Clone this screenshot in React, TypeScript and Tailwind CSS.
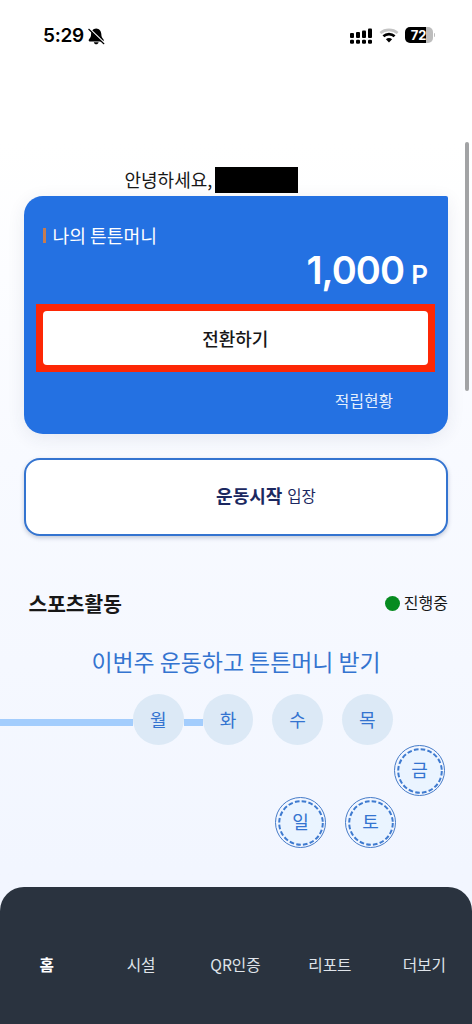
import clsx from "clsx";

const weekDays = ["월", "화", "수", "목"];

const menus = [
    { name: "홈", active: true },
    { name: "시설", active: false },
    { name: "QR인증", active: false },
    { name: "리포트", active: false },
    { name: "더보기", active: false },
];

function StatusBar() {
    return (
        <div className="flex h-[72px] items-start justify-between pl-[43px] pr-[37px] pt-[23px] text-black">
            <div className="flex items-center">
                <span className="font-['Inter'] text-[19px] font-semibold leading-[26px] tracking-[-0.3px]">5:29</span>
                <svg className="ml-[4px] h-[17px] w-[17px]" viewBox="0 0 17 17">
                    <path d="M8.2 0.4C5 0.6 3.2 3 3.1 6C3 9 2.2 9.9 1 11.3C0.4 12.2 0.7 13.4 1.8 13.4H14.8C15.8 13.4 16 12.2 15.4 11.3C14.2 9.9 13.4 9 13.3 6C13.2 3 11.3 0.6 8.2 0.4Z" fill="black" />
                    <path d="M5.8 14.2H10.6C10.2 15.7 9.3 16.3 8.2 16.3S6.2 15.7 5.8 14.2Z" fill="black" />
                    <path d="M1.6 0.8L16.4 15" stroke="white" strokeWidth="1.6" />
                    <path d="M0.8 1.3L15.8 15.7" stroke="black" strokeWidth="1.2" strokeLinecap="round" />
                </svg>
            </div>
            <div className="flex h-[26px] items-center">
                <svg className="mt-[-2px] h-[17px] w-[23px]" viewBox="0 0 23 17">
                    <rect x="0" y="6" width="4" height="5" rx="1" />
                    <rect x="6" y="5" width="4" height="6" rx="1" />
                    <rect x="12" y="3.5" width="4" height="7.5" rx="1" />
                    <rect x="18" y="1.5" width="4" height="9.5" rx="1" />
                    <rect x="0" y="12.7" width="4" height="4" rx="1.2" />
                    <rect x="6" y="12.7" width="4" height="4" rx="1.2" />
                    <rect x="12" y="12.7" width="4" height="4" rx="1.2" />
                    <rect x="18" y="12.7" width="4" height="4" rx="1.2" />
                </svg>
                <svg className="ml-[6px] mt-[-2px] h-[15px] w-[20px]" viewBox="0 0 20 15" fill="none">
                    <path d="M1.4 5C6.1 0.8 13.9 0.8 18.6 5" stroke="#c4c4c4" strokeWidth="2.6" />
                    <path d="M4.4 8.3C7.5 5.4 12.5 5.4 15.6 8.3" stroke="black" strokeWidth="2.6" />
                    <path d="M10 14.4L6.9 11.2C8.7 9.7 11.3 9.7 13.1 11.2Z" fill="black" />
                </svg>
                <div className="ml-[6px] mt-[-2px] flex h-[16px] w-[28px] items-center justify-center rounded-[5px] bg-linear-to-r from-black from-[74%] to-[#bdbdbd] to-[74%]">
                    <span className="font-['Inter'] text-[13px] font-bold leading-none text-white">72</span>
                </div>
                <div className="ml-[1px] mt-[-2px] h-[4px] w-[1.5px] rounded-r-full bg-[#bdbdbd]" />
            </div>
        </div>
    );
}

function MoneyCard() {
    return (
        <div className="h-[238px] rounded-[19px] rounded-tr-[2px] bg-[#2471e2] px-[12px] text-white shadow-[0_4px_18px_rgba(40,60,90,0.09)]">
            <div className="flex items-center pl-[7px] pt-[27px]">
                <div className="h-[15px] w-[3px] bg-[#c57c50]" />
                <p className="ml-[6.5px] mt-[-1px] text-[18.2px] leading-[26px]">나의 튼튼머니</p>
            </div>
            <div className="flex h-[56px] items-baseline justify-end pr-[8px] pt-px font-['Inter'] font-semibold leading-[42px]">
                <span className="text-[38px] tracking-[-0.9px]">1,000</span>
                <span className="ml-[7px] text-[26px]">P</span>
            </div>
            {/* convert button */}
            <div className="h-[68px] w-[398.5px] bg-[#fd2705] p-[7px]">
                <button className="block h-[54px] w-full rounded-[4px] bg-white text-[18px] font-medium text-[#171717]">전환하기</button>
            </div>
            <p className="pr-[43px] pt-[17px] text-right text-[15.8px] leading-[23px] text-[#e3effd]">적립현황</p>
        </div>
    );
}

function DashedDay({ day }: { day: string }) {
    return (
        <div className="h-[51px] w-[51px] rounded-full border border-[#457bc8] p-[2px]">
            <div className="flex h-full w-full items-center justify-center rounded-full bg-[#eaf4ff]">
                <svg className="absolute h-[46px] w-[46px]" viewBox="0 0 46 46" fill="none">
                    <circle cx="23" cy="23" r="21.8" stroke="#3f7bd0" strokeWidth="2" strokeDasharray="4.65 2.2" />
                </svg>
                <span className="mt-[-3px]">{day}</span>
            </div>
        </div>
    );
}

function WeekTrack() {
    return (
        <div className="mt-[18px] text-[18px] leading-[26px] text-[#3474d0]">
            <div className="flex items-center">
                <div className="mt-[5px] h-[7px] w-[133px] bg-[#a3cdfd]" />
                {weekDays.map((day, i) => (
                    <div key={day} className="flex items-center">
                        <div className="flex h-[51px] w-[50.5px] items-center justify-center rounded-full bg-[#dce9f6]">
                            <span className="mt-[-2px]">{day}</span>
                        </div>
                        <div className={clsx("mt-[5px] h-[7px] w-[19.2px]", i === 0 && "bg-[#a3cdfd]")} />
                    </div>
                ))}
            </div>
            <div className="flex justify-end pr-[27px]">
                <DashedDay day="금" />
            </div>
            <div className="flex justify-end gap-[19px] pr-[76px] pt-px">
                <DashedDay day="일" />
                <DashedDay day="토" />
            </div>
        </div>
    );
}

export default function App() {
    return (
        <div className="relative flex h-[1024px] w-[472px] flex-col overflow-hidden bg-linear-to-b from-white from-[14%] via-[#f8faff] via-[45%] to-[#f2f6ff] to-[85%] font-['Noto_Sans_CJK_KR',sans-serif] text-[#171717]">
            <StatusBar />

            {/* greeting */}
            <div className="flex h-[124px] items-end pb-[3px] pl-[124.5px]">
                <p className="text-[18px] leading-[28px]">안녕하세요,</p>
                <div className="ml-[2.5px] h-[26px] w-[83px] bg-black" />
            </div>

            <div className="px-[24px]">
                <MoneyCard />
                <div className="mt-[24px] flex h-[78px] items-center justify-center rounded-[16px] border-[2.5px] border-[#3474d0] bg-white pb-[4px] pl-[60px] text-[#1b2860] shadow-[0_2px_4px_rgba(40,60,100,0.25)]">
                    <p className="text-[18px] font-bold">운동시작</p>
                    <p className="ml-[5px] mt-[1px] text-[15.5px]">입장</p>
                </div>
            </div>

            {/* sports activity */}
            <div className="mt-[52px] flex h-[30px] items-center justify-between pl-[28.5px] pr-[24px]">
                <h2 className="text-[20.3px] font-bold">스포츠활동</h2>
                <div className="flex items-center">
                    <div className="h-[15px] w-[15px] rounded-full bg-[#068b20]" />
                    <p className="ml-[4px] mt-[-2px] text-[16px]">진행중</p>
                </div>
            </div>
            <p className="mt-[28px] text-center text-[22.9px] leading-[30px] text-[#3474d0]">이번주 운동하고 튼튼머니 받기</p>
            <WeekTrack />

            {/* bottom menu */}
            <div className="mt-auto grid h-[137px] grid-cols-5 rounded-t-[24px] bg-[#2a333f] pt-[66px] text-center text-[15.7px] leading-[24px] text-[#dfe4ea]">
                {menus.map((menu) => (
                    <p key={menu.name} className={clsx("ml-[-1px]", menu.active && "font-bold text-white")}>{menu.name}</p>
                ))}
            </div>

            {/* scroll thumb */}
            <div className="absolute right-[3px] top-[142px] h-[249px] w-[4px] rounded-full bg-[#a2a3a5]" />
        </div>
    );
}
